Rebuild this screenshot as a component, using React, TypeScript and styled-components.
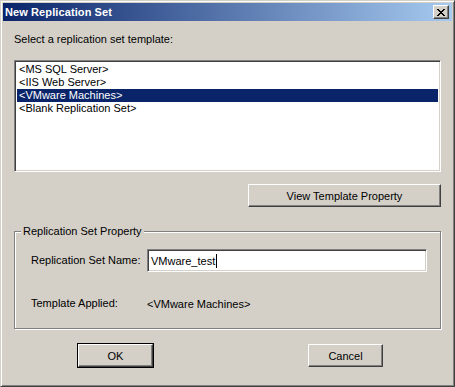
import React from "react";
import styled, { createGlobalStyle, css } from "styled-components";

const FACE = "#d4d0c8";
const SHADOW = "#808080";
const DARK = "#404040";
const NAVY = "#0a246a";

const GlobalStyle = createGlobalStyle`
  html, body {
    margin: 0;
    padding: 0;
    background: ${FACE};
  }
  body {
    font-family: "Liberation Sans", Arial, sans-serif;
    font-size: 11px;
    color: #000;
  }
`;

const Window = styled.div`
  box-sizing: border-box;
  width: 455px;
  height: 387px;
  display: flex;
  flex-direction: column;
  background: ${FACE};
  border-top: 1px solid ${FACE};
  border-left: 1px solid ${FACE};
  border-right: 1px solid ${DARK};
  border-bottom: 1px solid ${DARK};
  box-shadow: inset 1px 1px 0 #fff, inset -1px -1px 0 ${SHADOW};
  padding: 2px;
`;

const TitleBar = styled.div`
  height: 18px;
  display: flex;
  align-items: center;
  justify-content: space-between;
  padding: 0 3px 0 2px;
  background: linear-gradient(to right, ${NAVY}, #a6caf0);
`;

const Title = styled.span`
  color: #fff;
  font-weight: bold;
  font-size: 11px;
  letter-spacing: 0.1px;
`;

const raised = css`
  border-top: 1px solid #fff;
  border-left: 1px solid #fff;
  border-right: 1px solid ${DARK};
  border-bottom: 1px solid ${DARK};
  box-shadow: inset -1px -1px 0 ${SHADOW};
  background: ${FACE};
`;

const CloseButton = styled.div`
  box-sizing: border-box;
  width: 16px;
  height: 14px;
  display: flex;
  align-items: center;
  justify-content: center;
  ${raised};
`;

const Body = styled.div`
  flex: 1;
  display: flex;
  flex-direction: column;
  padding: 12px 11px 0 11px;
`;

const Label = styled.div`
  line-height: 13px;
`;

const ListBox = styled.div`
  box-sizing: border-box;
  margin-top: 14px;
  height: 112px;
  background: #fff;
  border-top: 1px solid ${SHADOW};
  border-left: 1px solid ${SHADOW};
  border-right: 1px solid #fff;
  border-bottom: 1px solid #fff;
  box-shadow: inset 1px 1px 0 ${DARK}, inset -1px -1px 0 ${FACE};
  padding: 2px 2px;
`;

const Item = styled.div<{ $selected?: boolean }>`
  height: 13px;
  line-height: 13px;
  padding-left: 2px;
  white-space: nowrap;
  background: ${(p) => (p.$selected ? NAVY : "transparent")};
  color: ${(p) => (p.$selected ? "#fff" : "#000")};
`;

const ButtonRow = styled.div<{ $justify: string }>`
  display: flex;
  justify-content: ${(p) => p.$justify};
`;

const Button = styled.div<{ $width: number; $default?: boolean }>`
  box-sizing: border-box;
  width: ${(p) => p.$width}px;
  height: 23px;
  display: flex;
  align-items: center;
  justify-content: center;
  ${raised};
  ${(p) =>
    p.$default &&
    css`
      outline: 1px solid #000;
      outline-offset: 0;
    `}
`;

const Group = styled.div`
  position: relative;
  box-sizing: border-box;
  margin-top: 24px;
  height: 98px;
  border: 1px solid ${SHADOW};
  box-shadow: inset 1px 1px 0 #fff, 1px 1px 0 #fff;
  padding: 17px 13px 0 16px;
  display: flex;
  flex-direction: column;
`;

const Legend = styled.span`
  position: absolute;
  top: -7px;
  left: 6px;
  padding: 0 2px;
  background: ${FACE};
  line-height: 13px;
`;

const FieldRow = styled.div<{ $gap?: number }>`
  display: flex;
  align-items: center;
  margin-top: ${(p) => p.$gap ?? 0}px;
`;

const FieldLabel = styled.span`
  width: 116px;
  flex: none;
  line-height: 13px;
`;

const TextInput = styled.div`
  box-sizing: border-box;
  flex: 1;
  height: 23px;
  display: flex;
  align-items: center;
  padding-left: 3px;
  background: #fff;
  border-top: 1px solid ${SHADOW};
  border-left: 1px solid ${SHADOW};
  border-right: 1px solid #fff;
  border-bottom: 1px solid #fff;
  box-shadow: inset 1px 1px 0 ${DARK}, inset -1px -1px 0 ${FACE};
`;

const Caret = styled.span`
  display: inline-block;
  width: 1px;
  height: 14px;
  background: #000;
  margin-left: 1px;
`;

const templates = [
  "<MS SQL Server>",
  "<IIS Web Server>",
  "<VMware Machines>",
  "<Blank Replication Set>",
];

export default function App() {
  return (
    <>
      <GlobalStyle />
      <Window>
        <TitleBar>
          <Title>New Replication Set</Title>
          <CloseButton>
            <svg width="8" height="7" viewBox="0 0 8 7">
              <path
                d="M0 0h2v1h1v1h2V1h1V0h2v1H7v1H6v1H5v1h1v1h1v1h1v1H6V6H5V5H3v1H2v1H0V6h1V5h1V4h1V3H2V2H1V1H0z"
                fill="#000"
              />
            </svg>
          </CloseButton>
        </TitleBar>
        <Body>
          <Label>Select a replication set template:</Label>
          <ListBox>
            {templates.map((t, i) => (
              <Item key={t} $selected={i === 2}>
                {t}
              </Item>
            ))}
          </ListBox>
          <ButtonRow $justify="flex-end" style={{ marginTop: 12 }}>
            <Button $width={193}>View Template Property</Button>
          </ButtonRow>
          <Group>
            <Legend>Replication Set Property</Legend>
            <FieldRow>
              <FieldLabel>Replication Set Name:</FieldLabel>
              <TextInput>
                VMware_test
                <Caret />
              </TextInput>
            </FieldRow>
            <FieldRow $gap={25}>
              <FieldLabel>Template Applied:</FieldLabel>
              <span>&lt;VMware Machines&gt;</span>
            </FieldRow>
          </Group>
          <ButtonRow $justify="space-between" style={{ marginTop: 15, padding: "0 58px 0 64px" }}>
            <Button $width={75} $default>
              OK
            </Button>
            <Button $width={75}>Cancel</Button>
          </ButtonRow>
        </Body>
      </Window>
    </>
  );
}
